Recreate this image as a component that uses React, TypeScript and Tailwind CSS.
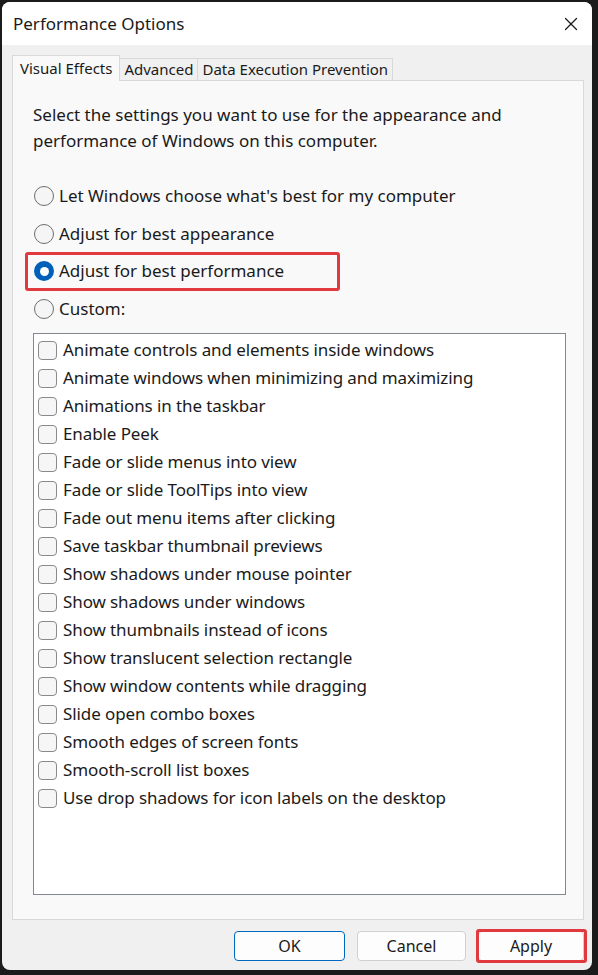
import { X } from "lucide-react";

const font = { fontFamily: '"Segoe UI", "Noto Sans", sans-serif' };

const effects = [
  "Animate controls and elements inside windows",
  "Animate windows when minimizing and maximizing",
  "Animations in the taskbar",
  "Enable Peek",
  "Fade or slide menus into view",
  "Fade or slide ToolTips into view",
  "Fade out menu items after clicking",
  "Save taskbar thumbnail previews",
  "Show shadows under mouse pointer",
  "Show shadows under windows",
  "Show thumbnails instead of icons",
  "Show translucent selection rectangle",
  "Show window contents while dragging",
  "Slide open combo boxes",
  "Smooth edges of screen fonts",
  "Smooth-scroll list boxes",
  "Use drop shadows for icon labels on the desktop",
];

const Radio = ({ checked }: { checked?: boolean }) =>
  checked ? (
    <span className="grid h-[20px] w-[20px] place-items-center rounded-full bg-[#005fb8]">
      <span className="h-[9px] w-[9px] rounded-full bg-white" />
    </span>
  ) : (
    <span className="h-[20px] w-[20px] rounded-full border border-[#6e6e6e] bg-[#f5f5f5]" />
  );

const App = () => {
  return (
    <div className="h-[975px] w-[598px] bg-[#1b1b1b] pt-[2px] pr-[6px] pb-[5px] pl-[2px]" style={font}>
      <div className="flex h-full flex-col overflow-hidden rounded-[8px] bg-[#f0f0f0] text-[#1a1a1a]">
        {/* title bar */}
        <div className="flex h-[43px] items-center justify-between bg-white pl-[11px] pr-[10px]">
          <span className="text-[17px]">Performance Options</span>
          <X className="h-[22px] w-[22px]" strokeWidth={1.3} />
        </div>

        {/* tabs */}
        <div className="mt-[10px] flex items-end pl-[10px] text-[15px]">
          <div className="relative z-10 -mb-px flex h-[26px] items-center border border-b-0 border-[#d9d9d9] bg-[#f9f9f9] px-[7px]">
            Visual Effects
          </div>
          <div className="flex h-[22px] items-center border border-l-0 border-b-0 border-[#d9d9d9] bg-[#f0f0f0] px-[4px]">
            Advanced
          </div>
          <div className="flex h-[22px] items-center border border-l-0 border-b-0 border-[#d9d9d9] bg-[#f0f0f0] px-[4px]">
            Data Execution Prevention
          </div>
        </div>

        {/* panel */}
        <div className="mr-[8px] ml-[10px] border border-[#d9d9d9] bg-[#f9f9f9] pt-[21px] pr-[17px] pb-[24px] pl-[20px] text-[17px]">
          <p className="leading-[26px]">
            Select the settings you want to use for the appearance and
            <br />
            performance of Windows on this computer.
          </p>

          <div className="mt-[23px] flex flex-col">
            <label className="flex h-[38px] items-center gap-[5px] pl-px">
              <Radio />
              Let Windows choose what's best for my computer
            </label>
            <label className="flex h-[37px] items-center gap-[5px] pl-px">
              <Radio />
              Adjust for best appearance
            </label>
            <label className="relative flex h-[38px] items-center gap-[5px] pl-px">
              <Radio checked />
              Adjust for best performance
              <span className="absolute top-[0px] left-[-8px] h-[39px] w-[315px] rounded-[3px] border-[3px] border-[#e0393e]" />
            </label>
            <label className="flex h-[38px] items-center gap-[5px] pl-px">
              <Radio />
              Custom:
            </label>
          </div>

          <div className="mt-[5px] h-[562px] border border-[#828790] bg-white pt-[2px] pl-[4px]">
            {effects.map((e) => (
              <div key={e} className="flex h-[28px] items-center gap-[6px] tracking-[-0.1px]">
                <span className="h-[19px] w-[19px] shrink-0 rounded-[4px] border border-[#8a8a8a] bg-[#f6f6f6]" />
                {e}
              </div>
            ))}
          </div>
        </div>

        {/* buttons */}
        <div className="mt-[11px] flex items-center justify-end gap-[12px] pr-[8px] text-[16px]">
          <button className="h-[30px] w-[111px] rounded-[4px] border border-[#0067c0] bg-[#fdfdfd]">OK</button>
          <button className="h-[30px] w-[109px] rounded-[4px] border border-[#d0d0d0] bg-[#fdfdfd]">Cancel</button>
          <div className="relative">
            <button className="h-[30px] w-[106px] rounded-[4px] border border-[#d0d0d0] bg-[#fdfdfd]">Apply</button>
            <span className="absolute -inset-[2px] -right-[3px] rounded-[3px] border-[3px] border-[#e0393e]" />
          </div>
        </div>
      </div>
    </div>
  );
};

export default App;
